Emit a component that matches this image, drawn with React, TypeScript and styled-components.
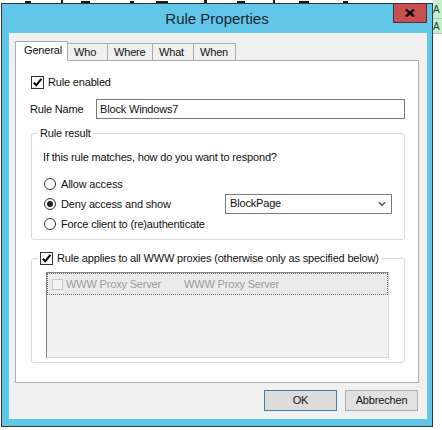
import React from 'react';
import styled, { createGlobalStyle } from 'styled-components';

const GlobalStyle = createGlobalStyle`
  html, body {
    margin: 0;
    padding: 0;
    width: 442px;
    height: 430px;
    overflow: hidden;
    background: #ffffff;
  }
  body {
    font-family: "Liberation Sans", Arial, sans-serif;
    font-size: 11px;
    line-height: 13px;
    letter-spacing: -0.17px;
    color: #111111;
  }
`;

const Desktop = styled.div`
  display: flex;
  width: 442px;
  height: 430px;
  background: #ffffff;
`;

const WindowColumn = styled.div`
  display: flex;
  flex-direction: column;
  padding-left: 1px;
`;

/* bits of the page behind the dialog, peeking out above it */
const Backdrop = styled.div`
  height: 3px;
  display: flex;
  align-items: flex-end;
  padding-left: 20px;
`;

const BackdropMark = styled.span<{ $w: number; $gap: number; $h?: number }>`
  width: ${({ $w }) => $w}px;
  height: ${({ $h }) => $h ?? 2}px;
  margin-left: ${({ $gap }) => $gap}px;
  background: #1a1a1a;
`;

const Sheet = styled.div`
  width: 9px;
  display: flex;
  flex-direction: column;
`;

const SheetCell = styled.div<{ $h: number }>`
  height: ${({ $h }) => $h}px;
  background: #c6efce;
  border-bottom: 1px solid #a9cfb0;
  color: #0b4a1f;
  font-size: 10px;
  display: flex;
  align-items: center;
  overflow: hidden;
`;

const Window = styled.div`
  position: relative;
  box-sizing: border-box;
  width: 432px;
  height: 424px;
  border: 1px solid #2c3a44;
  background: #62c6e8;
  padding: 0 5px 7px 7px;
  display: flex;
  flex-direction: column;
`;

const TitleBar = styled.div`
  height: 29px;
  margin: 0 -5px 0 -7px;
  display: flex;
  align-items: center;
  justify-content: center;
  padding-bottom: 1px;
  box-sizing: border-box;
  font-size: 15px;
  line-height: 17px;
  letter-spacing: 0;
  color: #1b2630;
`;

const CloseButton = styled.div`
  position: absolute;
  top: -1px;
  right: 5px;
  width: 34px;
  height: 20px;
  box-sizing: border-box;
  background: #c75050;
  border: 1px solid #4a3030;
  display: flex;
  align-items: center;
  justify-content: center;
`;

const Client = styled.div`
  box-sizing: border-box;
  height: 386px;
  background: #f0f0f0;
  padding: 8px 8px 8px 6px;
  display: flex;
  flex-direction: column;
`;

const TabStrip = styled.div`
  display: flex;
  align-items: flex-end;
  height: 19px;
`;

const Tab = styled.div<{ $active?: boolean; $w: number }>`
  position: relative;
  box-sizing: border-box;
  width: ${({ $w }) => $w}px;
  height: ${({ $active }) => ($active ? 20 : 17)}px;
  margin-bottom: ${({ $active }) => ($active ? -1 : 0)}px;
  margin-left: ${({ $active }) => ($active ? 0 : -1)}px;
  z-index: ${({ $active }) => ($active ? 2 : 1)};
  border: 1px solid #acacac;
  border-bottom: none;
  background: ${({ $active }) => ($active ? '#ffffff' : '#f0f0f0')};
  padding: ${({ $active }) => ($active ? '2px 0 0 8px' : '2px 0 0 6px')};
  white-space: nowrap;

  &:first-child {
    margin-left: 0;
  }
`;

const TabPage = styled.div`
  box-sizing: border-box;
  height: 323px;
  background: #ffffff;
  border: 1px solid #adadad;
  padding: 0 13px 0 14px;
  display: flex;
  flex-direction: column;
`;

const CheckRow = styled.label`
  display: flex;
  align-items: center;
  gap: 4px;
  margin: 15px 0 0 1px;
  height: 13px;
`;

const Box = styled.span<{ $disabled?: boolean; $size?: number }>`
  box-sizing: border-box;
  width: ${({ $size }) => $size ?? 13}px;
  height: ${({ $size }) => $size ?? 13}px;
  flex: none;
  border: 1px solid ${({ $disabled }) => ($disabled ? '#c8c8c8' : '#333333')};
  background: ${({ $disabled }) => ($disabled ? '#f4f4f4' : '#ffffff')};
  display: flex;
  align-items: center;
  justify-content: center;
`;

const FieldRow = styled.div`
  display: flex;
  align-items: center;
  height: 20px;
  margin-top: 10px;
`;

const FieldLabel = styled.span`
  width: 66px;
  flex: none;
`;

const TextInput = styled.div`
  box-sizing: border-box;
  flex: 1;
  height: 20px;
  border: 1px solid #7a7a7a;
  background: #ffffff;
  padding-left: 3px;
  display: flex;
  align-items: center;
`;

const Group = styled.fieldset<{ $gap: number; $bottom: number }>`
  margin: ${({ $gap }) => $gap}px 0 0 1px;
  border: 1px solid #dcdcdc;
  border-radius: 3px;
  padding: 0 0 ${({ $bottom }) => $bottom}px 0;
  min-width: 0;
`;

const Legend = styled.legend`
  margin-left: 6px;
  padding: 0 2px;
  height: 13px;
  display: flex;
  align-items: center;
  gap: 4px;
`;

const Prompt = styled.div`
  margin: 11px 0 0 11px;
`;

const OptionGrid = styled.div`
  display: grid;
  grid-template-columns: 181px 167px;
  grid-auto-rows: 20px;
  margin: 10px 0 0 12px;
`;

const RadioRow = styled.label`
  grid-column: 1;
  display: flex;
  align-items: center;
  gap: 5px;
`;

const Radio = styled.span<{ $checked?: boolean }>`
  box-sizing: border-box;
  width: 12px;
  height: 12px;
  flex: none;
  border: 1px solid #333333;
  border-radius: 50%;
  background: #ffffff;
  display: flex;
  align-items: center;
  justify-content: center;

  &::after {
    content: '';
    width: 6px;
    height: 6px;
    border-radius: 50%;
    background: ${({ $checked }) => ($checked ? '#222222' : 'transparent')};
  }
`;

const Dropdown = styled.div`
  grid-column: 2;
  grid-row: 2;
  align-self: center;
  box-sizing: border-box;
  height: 20px;
  margin-top: -1px;
  border: 1px solid #7a7a7a;
  background: #ffffff;
  display: flex;
  align-items: center;
  justify-content: space-between;
  padding: 0 5px 0 4px;
`;

const ProxyList = styled.div`
  box-sizing: border-box;
  width: 343px;
  height: 86px;
  margin: 7px 0 0 14px;
  background: #f0f0f0;
  border-top: 1px solid #828790;
  border-left: 1px solid #828790;
  border-right: 1px solid #dadada;
  border-bottom: 1px solid #dadada;
`;

const ProxyRow = styled.div`
  box-sizing: border-box;
  height: 22px;
  border: 1px dotted #707070;
  background: #ebebeb;
  display: flex;
  align-items: center;
  padding-left: 4px;
  color: #9c9c9c;
`;

const ProxyCell = styled.span<{ $w?: number }>`
  width: ${({ $w }) => ($w ? `${$w}px` : 'auto')};
  flex: none;
  white-space: nowrap;
`;

const ButtonBar = styled.div`
  display: flex;
  justify-content: flex-end;
  gap: 8px;
  margin-top: 7px;
  padding-right: 1px;
`;

const DialogButton = styled.button<{ $primary?: boolean }>`
  box-sizing: border-box;
  width: 73px;
  height: 21px;
  padding: 0;
  margin: 0;
  font: inherit;
  letter-spacing: inherit;
  color: #111111;
  background: ${({ $primary }) => ($primary ? '#dcdcdc' : '#e1e1e1')};
  border: 1px solid ${({ $primary }) => ($primary ? '#3c7fb1' : '#adadad')};
`;

const Check = () => (
  <svg width="11" height="11" viewBox="0 0 11 11">
    <path d="M1.8 5.6 L4.3 8.2 L9.4 1.9" fill="none" stroke="#000" strokeWidth="2" />
  </svg>
);

const Chevron = () => (
  <svg width="8" height="6" viewBox="0 0 8 6">
    <path d="M1 1.2 L4 4.4 L7 1.2" fill="none" stroke="#5a5a5a" strokeWidth="1.6" />
  </svg>
);

const CloseGlyph = () => (
  <svg width="10" height="8" viewBox="0 0 10 8">
    <path d="M1 0.6 L9 7.4 M9 0.6 L1 7.4" stroke="#000" strokeWidth="2.2" />
  </svg>
);

const backdropMarks = [
  { w: 6, gap: 4 },
  { w: 2, gap: 30, h: 3 },
  { w: 9, gap: 18 },
  { w: 4, gap: 40 },
  { w: 12, gap: 22 },
  { w: 3, gap: 36, h: 3 },
  { w: 8, gap: 30 },
  { w: 2, gap: 28, h: 3 },
  { w: 10, gap: 24 },
  { w: 5, gap: 34 },
];

const tabs = [
  { label: 'General', w: 53, active: true },
  { label: 'Who', w: 41 },
  { label: 'Where', w: 46 },
  { label: 'What', w: 42 },
  { label: 'When', w: 43 },
];

const responses = [
  { label: 'Allow access', checked: false },
  { label: 'Deny access and show', checked: true },
  { label: 'Force client to (re)authenticate', checked: false },
];

export default function App() {
  return (
    <>
      <GlobalStyle />
      <Desktop>
        <WindowColumn>
          <Backdrop>
            {backdropMarks.map((m, i) => (
              <BackdropMark key={i} $w={m.w} $gap={m.gap} $h={m.h} />
            ))}
          </Backdrop>
          <Window>
            <TitleBar>Rule Properties</TitleBar>
            <CloseButton>
              <CloseGlyph />
            </CloseButton>
            <Client>
              <TabStrip>
                {tabs.map((t) => (
                  <Tab key={t.label} $w={t.w} $active={t.active}>
                    {t.label}
                  </Tab>
                ))}
              </TabStrip>
              <TabPage>
                <CheckRow>
                  <Box>
                    <Check />
                  </Box>
                  Rule enabled
                </CheckRow>
                <FieldRow>
                  <FieldLabel>Rule Name</FieldLabel>
                  <TextInput>Block Windows7</TextInput>
                </FieldRow>
                <Group $gap={8} $bottom={5}>
                  <Legend>Rule result</Legend>
                  <Prompt>If this rule matches, how do you want to respond?</Prompt>
                  <OptionGrid>
                    {responses.map((r) => (
                      <RadioRow key={r.label}>
                        <Radio $checked={r.checked} />
                        {r.label}
                      </RadioRow>
                    ))}
                    <Dropdown>
                      BlockPage
                      <Chevron />
                    </Dropdown>
                  </OptionGrid>
                </Group>
                <Group $gap={12} $bottom={4}>
                  <Legend>
                    <Box>
                      <Check />
                    </Box>
                    Rule applies to all WWW proxies (otherwise only as specified below)
                  </Legend>
                  <ProxyList>
                    <ProxyRow>
                      <Box $disabled $size={11} style={{ marginRight: 3 }} />
                      <ProxyCell $w={118}>WWW Proxy Server</ProxyCell>
                      <ProxyCell>WWW Proxy Server</ProxyCell>
                    </ProxyRow>
                  </ProxyList>
                </Group>
              </TabPage>
              <ButtonBar>
                <DialogButton $primary>OK</DialogButton>
                <DialogButton>Abbrechen</DialogButton>
              </ButtonBar>
            </Client>
          </Window>
        </WindowColumn>
        <Sheet>
          <SheetCell $h={18}>A</SheetCell>
          <SheetCell $h={14}>A</SheetCell>
        </Sheet>
      </Desktop>
    </>
  );
}
